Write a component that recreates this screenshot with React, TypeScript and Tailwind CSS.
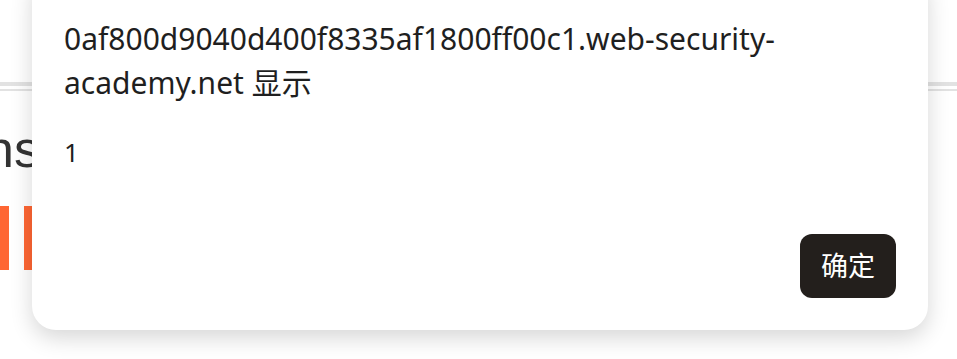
import React from "react";

export default function App() {
  return (
    <div className="relative w-[957px] h-[359px] overflow-hidden bg-white" style={{ fontFamily: '"Noto Sans", "Noto Sans CJK SC", sans-serif' }}>
      {/* background page */}
      <div className="flex flex-col">
        <div className="h-[82px]" />
        <div className="h-[4px] bg-[#e2e2e2]" />
        <div className="h-[3px]" />
        <div className="h-[2px] bg-[#e2e2e2]" />
        <div className="h-[30px]" />
        <div className="h-[56px] flex justify-end w-[40px] overflow-hidden text-[52px] leading-[56px] text-[#333]" style={{ fontFamily: '"Liberation Sans", sans-serif' }}>
          <span className="whitespace-nowrap">ons</span>
        </div>
        <div className="h-[29px]" />
        <div className="flex gap-[15px]">
          <div className="w-[9px] h-[64px] bg-[#ff6633]" />
          <div className="w-[9px] h-[64px] bg-[#ff6633]" />
        </div>
      </div>

      {/* alert dialog */}
      <div className="absolute left-[32px] top-[-30px] w-[896px] h-[360px] rounded-[24px] bg-white shadow-[0_8px_22px_rgba(0,0,0,0.16)] flex flex-col pl-[32px] pr-[32px] pt-[47px] pb-[32px]">
        <div className="text-[30px] leading-[44px] text-[#1f1f1f] w-[760px]">
          0af800d9040d400f8335af1800ff00c1.web-security-academy.net 显示
        </div>
        <div className="mt-[30px] text-[26px] leading-[34px] text-[#1f1f1f]">1</div>
        <div className="flex-1" />
        <div className="flex justify-end">
          <button className="w-[96px] h-[64px] rounded-[12px] bg-[#231f1c] text-white text-[27px] flex items-center justify-center">
            确定
          </button>
        </div>
      </div>
    </div>
  );
}
